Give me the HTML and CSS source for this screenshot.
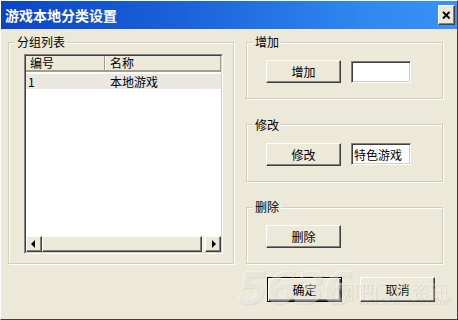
FILE: index.html
```html
<!DOCTYPE html>
<html lang="zh-CN">
<head>
    <meta charset="UTF-8">
    <title>游戏本地分类设置</title>
    <link rel="stylesheet" href="styles.css">
</head>
<body>
    <div class="window">
        <div class="titlebar">
            <span class="title">游戏本地分类设置</span>
            <button class="close" title="关闭">
                <svg width="17" height="20" viewBox="0 0 17 20">
                    <path d="M4.5 6.5 L12 14 M12 6.5 L4.5 14" stroke="#000" stroke-width="2.2" fill="none"/>
                </svg>
            </button>
        </div>

        <div class="client">
            <div class="groups">
                <fieldset class="group group-list">
                    <legend>分组列表</legend>
                    <div class="listview">
                        <div class="lv-inner">
                            <div class="lv-header">
                                <div class="lv-col col-id">编号</div>
                                <div class="lv-col col-name">名称</div>
                            </div>
                            <div class="lv-body">
                                <div class="lv-row selected">
                                    <span class="col-id">1</span>
                                    <span class="col-name">本地游戏</span>
                                </div>
                            </div>
                            <div class="hscroll">
                                <div class="sb-btn">
                                    <svg width="14" height="14" viewBox="0 0 14 14"><path d="M4 7 L8 3 L8 11 Z" fill="#000"/></svg>
                                </div>
                                <div class="sb-thumb"></div>
                                <div class="sb-btn">
                                    <svg width="14" height="14" viewBox="0 0 14 14"><path d="M6 3 L10 7 L6 11 Z" fill="#000"/></svg>
                                </div>
                            </div>
                        </div>
                    </div>
                </fieldset>

                <div class="side">
                    <fieldset class="group action">
                        <legend>增加</legend>
                        <div class="action-row">
                            <button class="btn">增加</button>
                            <input class="edit" type="text" value="">
                        </div>
                    </fieldset>
                    <fieldset class="group action">
                        <legend>修改</legend>
                        <div class="action-row">
                            <button class="btn">修改</button>
                            <input class="edit" type="text" value="特色游戏">
                        </div>
                    </fieldset>
                    <fieldset class="group action">
                        <legend>删除</legend>
                        <div class="action-row">
                            <button class="btn">删除</button>
                        </div>
                    </fieldset>
                </div>
            </div>

            <div class="footer">
                <button class="btn default">确定</button>
                <button class="btn">取消</button>
            </div>
        </div>

        <!-- watermark of the screenshot source -->
        <div class="watermark">
            <span class="wm-num">5636</span>
            <span class="wm-text">网吧门户资讯</span>
            <span class="wm-url">www.5636.com/netbar/</span>
        </div>
    </div>
</body>
</html>
```

FILE: styles.css
```css
html, body {
    margin: 0;
    padding: 0;
    background: #ece9d8;
    overflow: hidden;
}
body {
    font-family: "Noto Sans CJK SC", "DejaVu Sans", sans-serif;
    font-size: 12px;
    color: #000;
}
.window {
    position: relative;
    width: 458px;
    height: 320px;
    box-sizing: border-box;
    border: 1px solid;
    border-color: #fff #404040 #404040 #fff;
    background: #ece9d8;
}
.titlebar {
    height: 28px;
    display: flex;
    align-items: center;
    justify-content: space-between;
    padding: 0 2px 0 4px;
    background: linear-gradient(to right, #0b45c6, #1b62da 40%, #3088f0 80%, #3a92f6);
}
.title {
    color: #fff;
    font-weight: bold;
    font-size: 14px;
    line-height: 16px;
}
.close {
    width: 17px;
    height: 20px;
    padding: 0;
    margin: 0;
    border: 1px solid;
    border-color: #fff #404040 #404040 #fff;
    box-shadow: inset -1px -1px #808080;
    background: #ece9d8;
    display: flex;
    align-items: center;
    justify-content: center;
}
.close svg { display: block; }

.client {
    padding: 5px 0 0 7px;
}
.groups {
    display: grid;
    grid-template-columns: 226px 197px;
    column-gap: 12px;
}
.group {
    margin: 0;
    padding: 0;
    min-width: 0;
    box-sizing: border-box;
    border: 1px solid #d0cdbf;
    box-shadow: 1px 1px #fff, inset 1px 1px #fff;
}
.group legend {
    margin-left: 6px;
    padding: 0 2px;
    line-height: 16px;
    font-size: 12px;
    background: #ece9d8;
}
.group-list {
    height: 230px;
}

/* list view */
.listview {
    height: 200px;
    margin: 4px 10px 0 15px;
    box-sizing: border-box;
    border: 1px solid;
    border-color: #848284 #fff #fff #848284;
}
.lv-inner {
    height: 100%;
    box-sizing: border-box;
    border: 1px solid;
    border-color: #404040 #d4d0c8 #d4d0c8 #404040;
    background: #fff;
    display: flex;
    flex-direction: column;
}
.lv-header {
    display: flex;
    height: 14px;
    background: #ece9d8;
    border-bottom: 2px solid #a19e8e;
}
.lv-col {
    line-height: 14px;
    box-sizing: border-box;
}
.lv-header .col-id {
    width: 79px;
    padding-left: 4px;
    border-right: 1px solid #a19e8e;
    box-shadow: 1px 0 #fff;
}
.lv-header .col-name {
    flex: 1;
    padding-left: 5px;
    border-right: 1px solid #a19e8e;
}
.lv-body {
    flex: 1;
    padding-top: 2px;
}
.lv-row {
    display: flex;
    height: 15px;
    line-height: 15px;
}
.lv-row.selected { background: #e9e7df; }
.lv-row .col-id {
    width: 80px;
    padding-left: 2px;
    box-sizing: border-box;
}
.lv-row .col-name { padding-left: 4px; }

.hscroll {
    display: flex;
    height: 16px;
    background: #f4f3ee;
}
.sb-btn, .sb-thumb {
    box-sizing: border-box;
    height: 16px;
    border: 1px solid;
    border-color: #fff #404040 #404040 #fff;
    box-shadow: inset -1px -1px #808080;
    background: #ece9d8;
}
.sb-btn {
    width: 16px;
    display: flex;
    align-items: center;
    justify-content: center;
}
.sb-thumb {
    flex: 1;
    margin-right: 3px;
}

/* right side groups */
.side {
    display: flex;
    flex-direction: column;
    justify-content: space-between;
    height: 230px;
}
.action {
    height: 65px;
}
.action-row {
    display: flex;
    align-items: center;
    gap: 10px;
    padding: 10px 0 0 19px;
}

.btn {
    width: 75px;
    height: 23px;
    padding: 0;
    margin: 0;
    font-family: inherit;
    font-size: 12px;
    color: #000;
    background: #ece9d8;
    border: 1px solid;
    border-color: #fff #404040 #404040 #fff;
    box-shadow: inset -1px -1px #808080;
}
.btn.default {
    border-color: #000;
    box-shadow: inset 1px 1px #fff, inset -1px -1px #404040, inset -2px -2px #808080;
}
.edit {
    width: 60px;
    height: 22px;
    box-sizing: border-box;
    margin: 0;
    padding: 1px 2px 0;
    font-family: inherit;
    font-size: 12px;
    border: 1px solid;
    border-color: #808080 #fff #fff #808080;
    box-shadow: inset 1px 1px #404040, inset -1px -1px #d4d0c8;
    background: #fff;
    outline: none;
}

.footer {
    display: flex;
    justify-content: flex-end;
    gap: 18px;
    margin-top: 13px;
    padding-right: 22px;
}
.footer .btn { height: 25px; }

.watermark {
    position: absolute;
    left: 236px;
    top: 262px;
    width: 216px;
    height: 52px;
    pointer-events: none;
}
.wm-num {
    position: absolute;
    left: 0;
    top: 0;
    font-family: "DejaVu Sans", sans-serif;
    font-size: 44px;
    font-weight: bold;
    font-style: italic;
    color: rgba(255, 255, 255, 0.35);
    text-shadow: 1px 1px rgba(120, 115, 100, 0.12);
    letter-spacing: -2px;
}
.wm-text {
    position: absolute;
    left: 98px;
    top: 14px;
    font-size: 19px;
    color: rgba(255, 255, 255, 0.3);
    text-shadow: 1px 1px rgba(120, 115, 100, 0.15);
}
.wm-url {
    position: absolute;
    left: 122px;
    top: 35px;
    font-family: "DejaVu Sans", sans-serif;
    font-size: 8px;
    font-style: italic;
    color: rgba(120, 115, 100, 0.18);
}
```
